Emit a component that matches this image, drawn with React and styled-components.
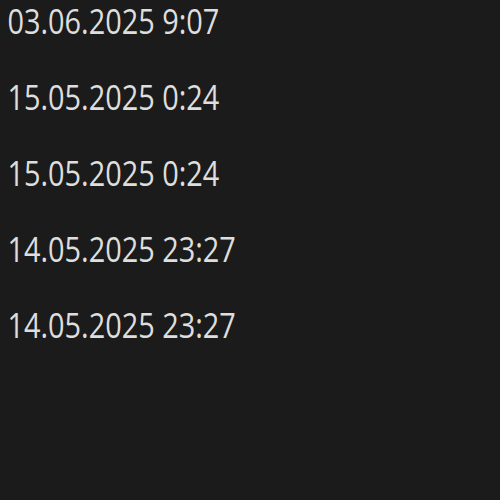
import React from 'react';
import styled, { createGlobalStyle } from 'styled-components';

const GlobalStyle = createGlobalStyle`
	html, body {
		margin: 0;
		padding: 0;
		background: #1b1b1b;
	}
`;

const Page = styled.div`
	width: 500px;
	height: 500px;
	background: #1b1b1b;
	overflow: hidden;
`;

const List = styled.div`
	display: flex;
	flex-direction: column;
	gap: 41px;
	padding-top: 3px;
	transform: scaleX(0.825);
	transform-origin: left top;
`;

const Row = styled.div`
	height: 35px;
	display: flex;
	align-items: center;
	padding-left: 9px;
	font-family: 'Open Sans', 'Noto Sans', sans-serif;
	font-size: 35px;
	line-height: 1;
	color: #dedede;
	white-space: nowrap;
`;

const dates = [
	'03.06.2025 9:07',
	'15.05.2025 0:24',
	'15.05.2025 0:24',
	'14.05.2025 23:27',
	'14.05.2025 23:27',
];

const App = () => {
	return (
		<Page>
			<GlobalStyle />
			<List>
				{dates.map((d, i) => (
					<Row key={i}>{d}</Row>
				))}
			</List>
		</Page>
	);
};

export default App;
